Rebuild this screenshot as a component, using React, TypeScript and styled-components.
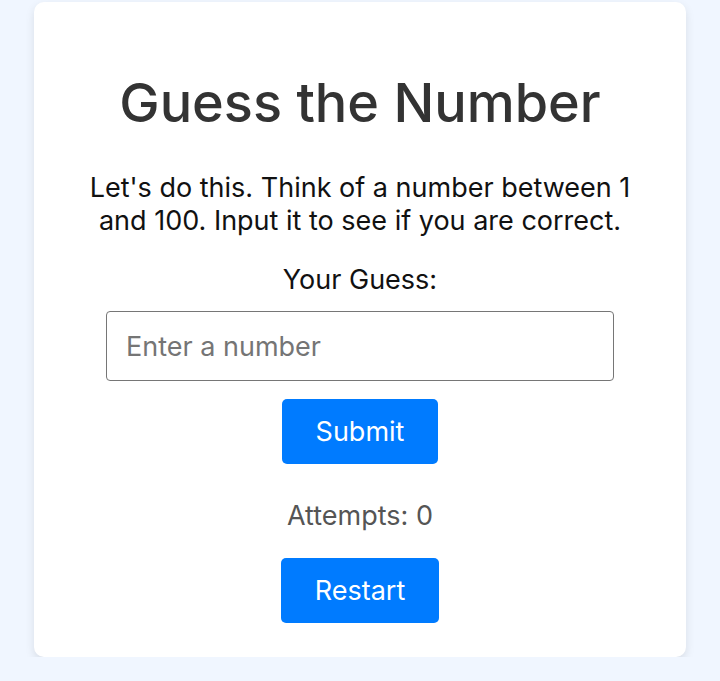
import React, { useState } from "react";
import styled, { createGlobalStyle } from "styled-components";

const GlobalStyle = createGlobalStyle`
  html, body {
    margin: 0;
    padding: 0;
    background: #f0f6ff;
    font-family: Inter, "Noto Sans", Arial, sans-serif;
  }
  * { box-sizing: border-box; }
`;

const Card = styled.div`
  width: 652px;
  margin: 2px auto 0;
  background: #ffffff;
  border-radius: 10px;
  box-shadow: 0 4px 10px rgba(0, 0, 0, 0.1);
  padding: 68px 40px 34px;
  display: flex;
  flex-direction: column;
  align-items: center;
  text-align: center;
`;

const Title = styled.h1`
  margin: 0;
  font-size: 54px;
  font-weight: 500;
  color: #333333;
  line-height: normal;
`;

const Description = styled.p`
  margin: 36px 0 0;
  font-size: 27px;
  line-height: normal;
  color: #111111;
`;

const Label = styled.label`
  margin-top: 26px;
  font-size: 27px;
  line-height: normal;
  color: #111111;
`;

const Input = styled.input`
  margin-top: 15px;
  width: 508px;
  height: 70px;
  padding: 0 19px;
  font-family: inherit;
  font-size: 27px;
  color: #222;
  border: 1px solid #767676;
  border-radius: 4px;
  outline: none;
  &::placeholder {
    color: #757575;
  }
`;

const Button = styled.button<{ $top: number }>`
  margin-top: ${(p) => p.$top}px;
  height: 65px;
  padding: 0 34px;
  font-family: inherit;
  font-size: 27px;
  color: #ffffff;
  background: #007bff;
  border: none;
  border-radius: 5px;
  cursor: pointer;
`;

const Attempts = styled.p`
  margin: 35px 0 0;
  font-size: 27px;
  line-height: normal;
  color: #555555;
`;

export default function App() {
  const [guess, setGuess] = useState("");
  const [attempts, setAttempts] = useState(0);
  return (
    <>
      <GlobalStyle />
      <Card>
        <Title>Guess the Number</Title>
        <Description>
          Let's do this. Think of a number between 1 and 100. Input it to see if you are correct.
        </Description>
        <Label htmlFor="guess">Your Guess:</Label>
        <Input
          id="guess"
          type="number"
          placeholder="Enter a number"
          value={guess}
          onChange={(e) => setGuess(e.target.value)}
        />
        <Button $top={18} onClick={() => guess && setAttempts((a) => a + 1)}>
          Submit
        </Button>
        <Attempts>Attempts: {attempts}</Attempts>
        <Button
          $top={26}
          onClick={() => {
            setAttempts(0);
            setGuess("");
          }}
        >
          Restart
        </Button>
      </Card>
    </>
  );
}
